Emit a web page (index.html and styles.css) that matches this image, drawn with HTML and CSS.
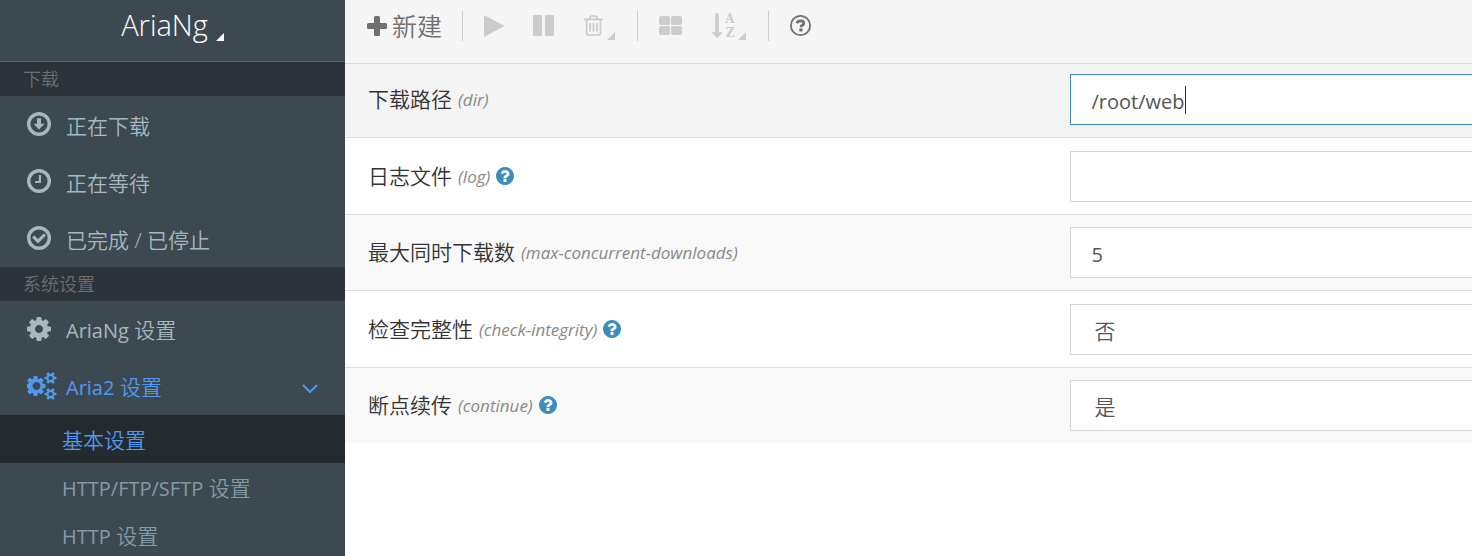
FILE: index.html
```html
<!DOCTYPE html>
<html lang="zh-CN">
<head>
<meta charset="utf-8">
<title>AriaNg</title>
<link rel="stylesheet" href="styles.css">
</head>
<body>
<svg class="defs" aria-hidden="true">
  <symbol id="help" viewBox="128 128 1536 1536"><path d="M1024 1376v-192q0-14-9-23t-23-9h-192q-14 0-23 9t-9 23v192q0 14 9 23t23 9h192q14 0 23-9t9-23zm256-672q0-88-55.5-163t-138.5-116-170-41q-243 0-371 213-15 24 8 42l132 100q7 6 19 6 16 0 25-12 53-68 86-92 34-24 86-24 48 0 85.5 26t37.5 59q0 38-20 61t-68 45q-63 28-115.5 86.5t-52.5 125.5v36q0 14 9 23t23 9h192q14 0 23-9t9-23q0-19 21.5-49.5t54.5-49.5q32-18 49-28.5t46-35 44.5-48 28-60.5 12.5-81zm384 192q0 209-103 385.5t-279.5 279.5-385.5 103-385.5-103-279.5-279.5-103-385.5 103-385.5 279.5-279.5 385.5-103 385.5 103 279.5 279.5 103 385.5z"/></symbol>
  <symbol id="corner" viewBox="0 0 8 8"><path d="M8 0v8H0z"/></symbol>
</svg>
<div class="app">
  <aside class="sidebar">
    <button class="brand" type="button"><span>AriaNg</span><svg class="corner"><use href="#corner"/></svg></button>
    <nav class="menu">
      <h2 class="section">下载</h2>
      <a class="item" href="#downloading">
        <svg class="icon" viewBox="0 0 24 24"><circle cx="12" cy="12" r="10.3" fill="none" stroke="currentColor" stroke-width="3.4"/><path d="M10 6.200h4v5.600h3.500L12 17.500l-5.500-5.700H10z"/></svg>
        <span>正在下载</span></a>
      <a class="item" href="#waiting">
        <svg class="icon" viewBox="0 0 24 24"><circle cx="12" cy="12" r="10.3" fill="none" stroke="currentColor" stroke-width="3.4"/><path d="M11.800 6h2.200v8H8v-2h3.800z"/></svg>
        <span>正在等待</span></a>
      <a class="item" href="#stopped">
        <svg class="icon" viewBox="0 0 24 24"><circle cx="12" cy="12" r="10.3" fill="none" stroke="currentColor" stroke-width="3.4"/><path d="M5 11.600l2.200-2.100 3.800 3.600 5.800-5.700 2.200 2.100-8 8.100z"/></svg>
        <span>已完成 / 已停止</span></a>
      <h2 class="section">系统设置</h2>
      <a class="item" href="#ariang">
        <svg class="icon" viewBox="128 128 1536 1536"><path d="M1152 896q0-106-75-181t-181-75-181 75-75 181 75 181 181 75 181-75 75-181zm512-109v222q0 12-8 23t-20 13l-185 28q-19 54-39 91 35 50 107 138 10 12 10 25t-9 23q-27 37-99 108t-94 71q-12 0-26-9l-138-108q-44 23-91 38-16 136-29 186-7 28-36 28h-222q-14 0-24.5-8.5t-11.5-21.5l-28-184q-49-16-90-37l-141 107q-10 9-25 9-14 0-25-11-126-114-165-168-7-10-7-23 0-12 8-23 15-21 51-66.5t54-70.5q-27-50-41-99l-183-27q-13-2-21-12.5t-8-23.5v-222q0-12 8-23t19-13l186-28q14-46 39-92-40-57-107-138-10-12-10-24 0-10 9-23 26-36 98.5-107.5t94.5-71.5q13 0 26 10l138 107q44-23 91-38 16-136 29-186 7-28 36-28h222q14 0 24.5 8.5t11.5 21.5l28 184q49 16 90 37l142-107q9-9 24-9 13 0 25 10 129 119 165 170 7 8 7 22 0 12-8 23-15 21-51 66.5t-54 70.5q26 50 41 98l183 28q13 2 21 12.5t8 23.5z"/></svg>
        <span><span class="latin">AriaNg</span> 设置</span></a>
      <a class="item item-active" href="#aria2">
        <svg class="icon icon-wide" viewBox="0 0 1856 1792"><path d="M832 896q0-106-75-181t-181-75-181 75-75 181 75 181 181 75 181-75 75-181zm768 512q0-52-38-90t-90-38-90 38-38 90q0 53 37.5 90.5t90.5 37.5 90.5-37.5 37.5-90.5zm0-1024q0-52-38-90t-90-38-90 38-38 90q0 53 37.5 90.5t90.5 37.5 90.5-37.5 37.5-90.5zm-448 421v185q0 10-7 19.5t-16 10.5l-155 24q-11 35-32 76 34 48 90 115 7 11 7 20 0 12-7 19-23 30-82.500 89.500t-78.500 59.500q-11 0-21-7l-115-90q-37 19-77 31-11 108-23 155-7 24-30 24h-186q-11 0-20-7.500t-10-17.500l-23-153q-34-10-75-31l-118 89q-7 7-20 7-11 0-21-8-144-133-144-160 0-9 7-19 10-14 41-53t47-61q-23-44-35-82l-152-24q-10-1-17-9.500t-7-19.500v-185q0-10 7-19.500t16-10.500l155-24q11-35 32-76-34-48-90-115-7-11-7-20 0-12 7-20 22-30 82-89t79-59q11 0 21 7l115 90q34-18 77-32 11-108 23-154 7-24 30-24h186q11 0 20 7.500t10 17.500l23 153q34 10 75 31l118-89q8-7 20-7 11 0 21 8 144 133 144 160 0 8-7 19-12 16-42 54t-45 60q23 48 34 82l152 23q10 2 17 10.500t7 19.500zm704 533v140q0 16-149 31-12 27-30 52 51 113 51 138 0 4-4 7-122 71-124 71-8 0-46-47t-52-68q-20 2-30 2t-30-2q-14 21-52 68t-46 47q-2 0-124-71-4-3-4-7 0-25 51-138-18-25-30-52-149-15-149-31v-140q0-16 149-31 13-29 30-52-51-113-51-138 0-4 4-7 4-2 35-20t59-34 30-16q8 0 46 46.500t52 67.500q20-2 30-2t30 2q51-71 92-112l6-2q4 0 124 70 4 3 4 7 0 25-51 138 17 23 30 52 149 15 149 31zm0-1024v140q0 16-149 31-12 27-30 52 51 113 51 138 0 4-4 7-122 71-124 71-8 0-46-47t-52-68q-20 2-30 2t-30-2q-14 21-52 68t-46 47q-2 0-124-71-4-3-4-7 0-25 51-138-18-25-30-52-149-15-149-31v-140q0-16 149-31 13-29 30-52-51-113-51-138 0-4 4-7 4-2 35-20t59-34 30-16q8 0 46 46.500t52 67.500q20-2 30-2t30 2q51-71 92-112l6-2q4 0 124 70 4 3 4 7 0 25-51 138 17 23 30 52 149 15 149 31z"/></svg>
        <span><span class="latin">Aria2</span> 设置</span>
        <svg class="chevron" viewBox="0 0 16 10"><path d="M1 1l7 7 7-7" fill="none" stroke="currentColor" stroke-width="2"/></svg></a>
      <a class="sub sub-active" href="#basic">基本设置</a>
      <a class="sub" href="#http-ftp"><span class="latin">HTTP/FTP/SFTP</span> 设置</a>
      <a class="sub" href="#http"><span class="latin">HTTP</span> 设置</a>
    </nav>
  </aside>
  <main class="main">
    <div class="toolbar">
      <button class="tool tool-new" type="button"><svg width="20" height="20" viewBox="0 0 20 20"><path d="M8.500 0h3q1.500 0 1.500 1.500V7h5.500q1.500 0 1.500 1.500v3q0 1.500-1.500 1.500H13v5.500q0 1.500-1.500 1.500h-3Q7 20 7 18.500V13H1.500Q0 13 0 11.500v-3Q0 7 1.500 7H7V1.500Q7 0 8.500 0z"/></svg><span>新建</span></button>
      <span class="divider"></span>
      <button class="tool tool-play" type="button" disabled aria-label="开始"><svg width="20" height="22" viewBox="0 0 20 22"><path d="M0 .8Q0 0 .8.400L19.500 10.500q.8.500 0 1L.8 21.600Q0 22 0 21.200z"/></svg></button>
      <button class="tool tool-pause" type="button" disabled aria-label="暂停"><svg width="21" height="21" viewBox="0 0 21 21"><rect width="9" height="21" rx="1"/><rect x="12" width="9" height="21" rx="1"/></svg></button>
      <button class="tool tool-drop" type="button" disabled aria-label="删除"><svg width="19" height="21" viewBox="192 128 1408 1536"><path d="M704 736v576q0 14-9 23t-23 9h-64q-14 0-23-9t-9-23v-576q0-14 9-23t23-9h64q14 0 23 9t9 23zm256 0v576q0 14-9 23t-23 9h-64q-14 0-23-9t-9-23v-576q0-14 9-23t23-9h64q14 0 23 9t9 23zm256 0v576q0 14-9 23t-23 9h-64q-14 0-23-9t-9-23v-576q0-14 9-23t23-9h64q14 0 23 9t9 23zm128 724v-948h-896v948q0 22 7 40.500t14.500 27 10.500 8.500h832q3 0 10.500-8.500t14.500-27 7-40.500zm-672-1076h448l-48-117q-7-9-17-11h-317q-10 2-17 11zm928 32v64q0 14-9 23t-23 9h-96v948q0 83-47 143.500t-113 60.500h-832q-66 0-113-58.500t-47-141.500v-952h-96q-14 0-23-9t-9-23v-64q0-14 9-23t23-9h309l70-167q15-37 54-63t79-26h320q40 0 79 26t54 63l70 167h309q14 0 23 9t9 23z"/></svg><svg class="corner"><use href="#corner"/></svg></button>
      <span class="divider"></span>
      <button class="tool tool-grid" type="button" disabled aria-label="全选"><svg width="23" height="19" viewBox="0 0 23 19"><rect width="11" height="9" rx="2"/><rect x="12" width="11" height="9" rx="2"/><rect y="10" width="11" height="9" rx="2"/><rect x="12" y="10" width="11" height="9" rx="2"/></svg></button>
      <button class="tool tool-sort" type="button" disabled aria-label="排序"><svg class="sort-arrow" width="10" height="25" viewBox="0 0 10 25"><path d="M3.200.5h3.600v18.700H10q.4.400 0 1L5 25 0 20.200q-.5-.6 0-1h3.200z"/></svg><span class="sort-letters"><span>A</span><span>Z</span></span><svg class="corner"><use href="#corner"/></svg></button>
      <span class="divider"></span>
      <button class="tool tool-help" type="button" aria-label="帮助"><svg width="21" height="21" viewBox="0 0 21 21"><circle cx="10.500" cy="10.500" r="9.600" fill="none" stroke="currentColor" stroke-width="1.800"/><path d="M6.900 8.200Q7.700 5.800 10.500 5.800q3.300 0 3.300 2.400 0 1.300-1.500 2.100-1.300.7-1.300 1.900" fill="none" stroke="currentColor" stroke-width="2.800"/><rect x="9.300" y="13.600" width="3.200" height="3" rx=".5"/></svg></button>
    </div>
    <form class="settings">
      <div class="row row-focus">
        <label class="label" for="dir"><span>下载路径</span> <em>(dir)</em></label>
        <div class="field focus"><input id="dir" class="fit" type="text" value="/root/web"><span class="caret"></span></div>
      </div>
      <div class="row">
        <label class="label" for="log"><span>日志文件</span> <em>(log)</em> <svg class="help"><use href="#help"/></svg></label>
        <div class="field"><input id="log" type="text"></div>
      </div>
      <div class="row">
        <label class="label" for="max"><span>最大同时下载数</span> <em>(max-concurrent-downloads)</em></label>
        <div class="field"><input id="max" type="text" value="5"></div>
      </div>
      <div class="row">
        <label class="label" for="check"><span>检查完整性</span> <em>(check-integrity)</em> <svg class="help"><use href="#help"/></svg></label>
        <div class="field"><select id="check"><option>否</option><option>是</option></select></div>
      </div>
      <div class="row">
        <label class="label" for="continue"><span>断点续传</span> <em>(continue)</em> <svg class="help"><use href="#help"/></svg></label>
        <div class="field"><select id="continue"><option>是</option><option>否</option></select></div>
      </div>
    </form>
  </main>
</div>
</body>
</html>
```
FILE: styles.css
```css
* { box-sizing: border-box; }
body {
  margin: 0;
  font: 350 21px/30px "Open Sans", "Noto Sans CJK SC", sans-serif;
  color: #333;
  background: #fff;
}
svg { display: block; flex: none; fill: currentColor; }
button, input, select { font: inherit; color: inherit; border: 0; background: none; border-radius: 0; }
button { padding: 0; }
a { color: inherit; text-decoration: none; }
.defs { position: absolute; width: 0; height: 0; }
.corner { width: 8px; height: 8px; }
.latin { font-size: 20px; font-weight: 400; }

.app { display: flex; height: 100vh; overflow: hidden; }
.sidebar { flex: 0 0 345px; background: #3d4951; color: #a6b8bd; overflow: hidden; }
.brand {
  display: flex;
  align-items: center;
  justify-content: center;
  gap: 8px;
  width: 100%;
  height: 62px;
  padding-bottom: 12px;
  border-bottom: 1px solid #5b676c;
  color: #fff;
  font-size: 29px;
  font-weight: 300;
}
.brand .corner { margin-top: 24px; }
.section {
  margin: 0;
  padding: 0 23px;
  background: #2d333a;
  color: #6c6e70;
  font-size: 18px;
  font-weight: 350;
  line-height: 34px;
}
.item { display: flex; align-items: center; gap: 15px; height: 57px; padding: 0 27px; }
.item > span { padding-top: 2px; }
.icon { width: 24px; height: 24px; margin-bottom: 2px; }
.icon-wide { width: 30px; height: 28px; margin-right: -6px; }
.item-active, .sub-active { color: #5098f0; }
.chevron { width: 16px; height: 10px; margin-left: auto; margin-top: 4px; }
.sub { display: block; padding: 2px 62px 0; height: 48px; line-height: 46px; color: #829ba5; }
.sub-active { background: #242b2e; color: #5098f0; }

.main { flex: 1; min-width: 0; }
.toolbar {
  display: flex;
  align-items: center;
  height: 64px;
  padding: 0 22px 12px;
  border-bottom: 1px solid #ddd;
  background: #f5f5f5;
  color: #707070;
}
.tool { display: flex; align-items: center; }
.tool:disabled { color: #ccc; }
.tool-new { gap: 5px; margin-right: 20px; font-size: 25px; }
.divider { width: 1px; height: 30px; background: #ccc; }
.tool-play { margin: 0 29px 0 21px; }
.tool-pause { margin-right: 30px; }
.tool-drop { gap: 4px; margin-right: 22px; }
.tool .corner { margin-top: 20px; }
.tool-grid { margin: 0 30px 0 21px; }
.tool-sort { gap: 2px; margin-right: 22px; }
.sort-letters { display: grid; grid-auto-rows: 14px; width: 12px; justify-items: center; font: bold 12px/14px "DejaVu Serif", serif; }
.tool-help { margin-left: 21px; }

.row {
  display: grid;
  grid-template-columns: 9fr 5fr;
  align-items: center;
  padding: 12px 0;
  border-bottom: 1px solid #ddd;
}
.row:nth-child(odd) { background: #f9f9f9; }
.row:nth-child(even) { padding-top: 13px; }
.row:last-child { border-bottom: 0; }
.row.row-focus { padding-top: 10px; background: #f4f4f4; }
.label { display: flex; align-items: center; gap: 6px; padding: 0 0 2px 23px; }
.label em { padding-top: 2px; color: #888; font-size: 17px; font-weight: 400; }
.help { width: 18px; height: 18px; color: #3c8dbc; }
.field { display: flex; align-items: center; height: 51px; border: 1px solid #d2d6de; border-right: 0; background: #fff; color: #555; }
.field.focus { border-color: #3c8dbc; }
.field input, .field select {
  flex: 1;
  min-width: 0;
  height: 100%;
  padding: 4px 21px 0;
  outline: 0;
  appearance: none;
  font-size: 20px;
  font-weight: 400;
}
.field .fit { flex: none; padding-right: 0; field-sizing: content; caret-color: transparent; }
.caret { width: 1px; height: 28px; background: #333; }
.field select { padding: 2px 24px 0; font-size: 21px; font-weight: 350; }
```
